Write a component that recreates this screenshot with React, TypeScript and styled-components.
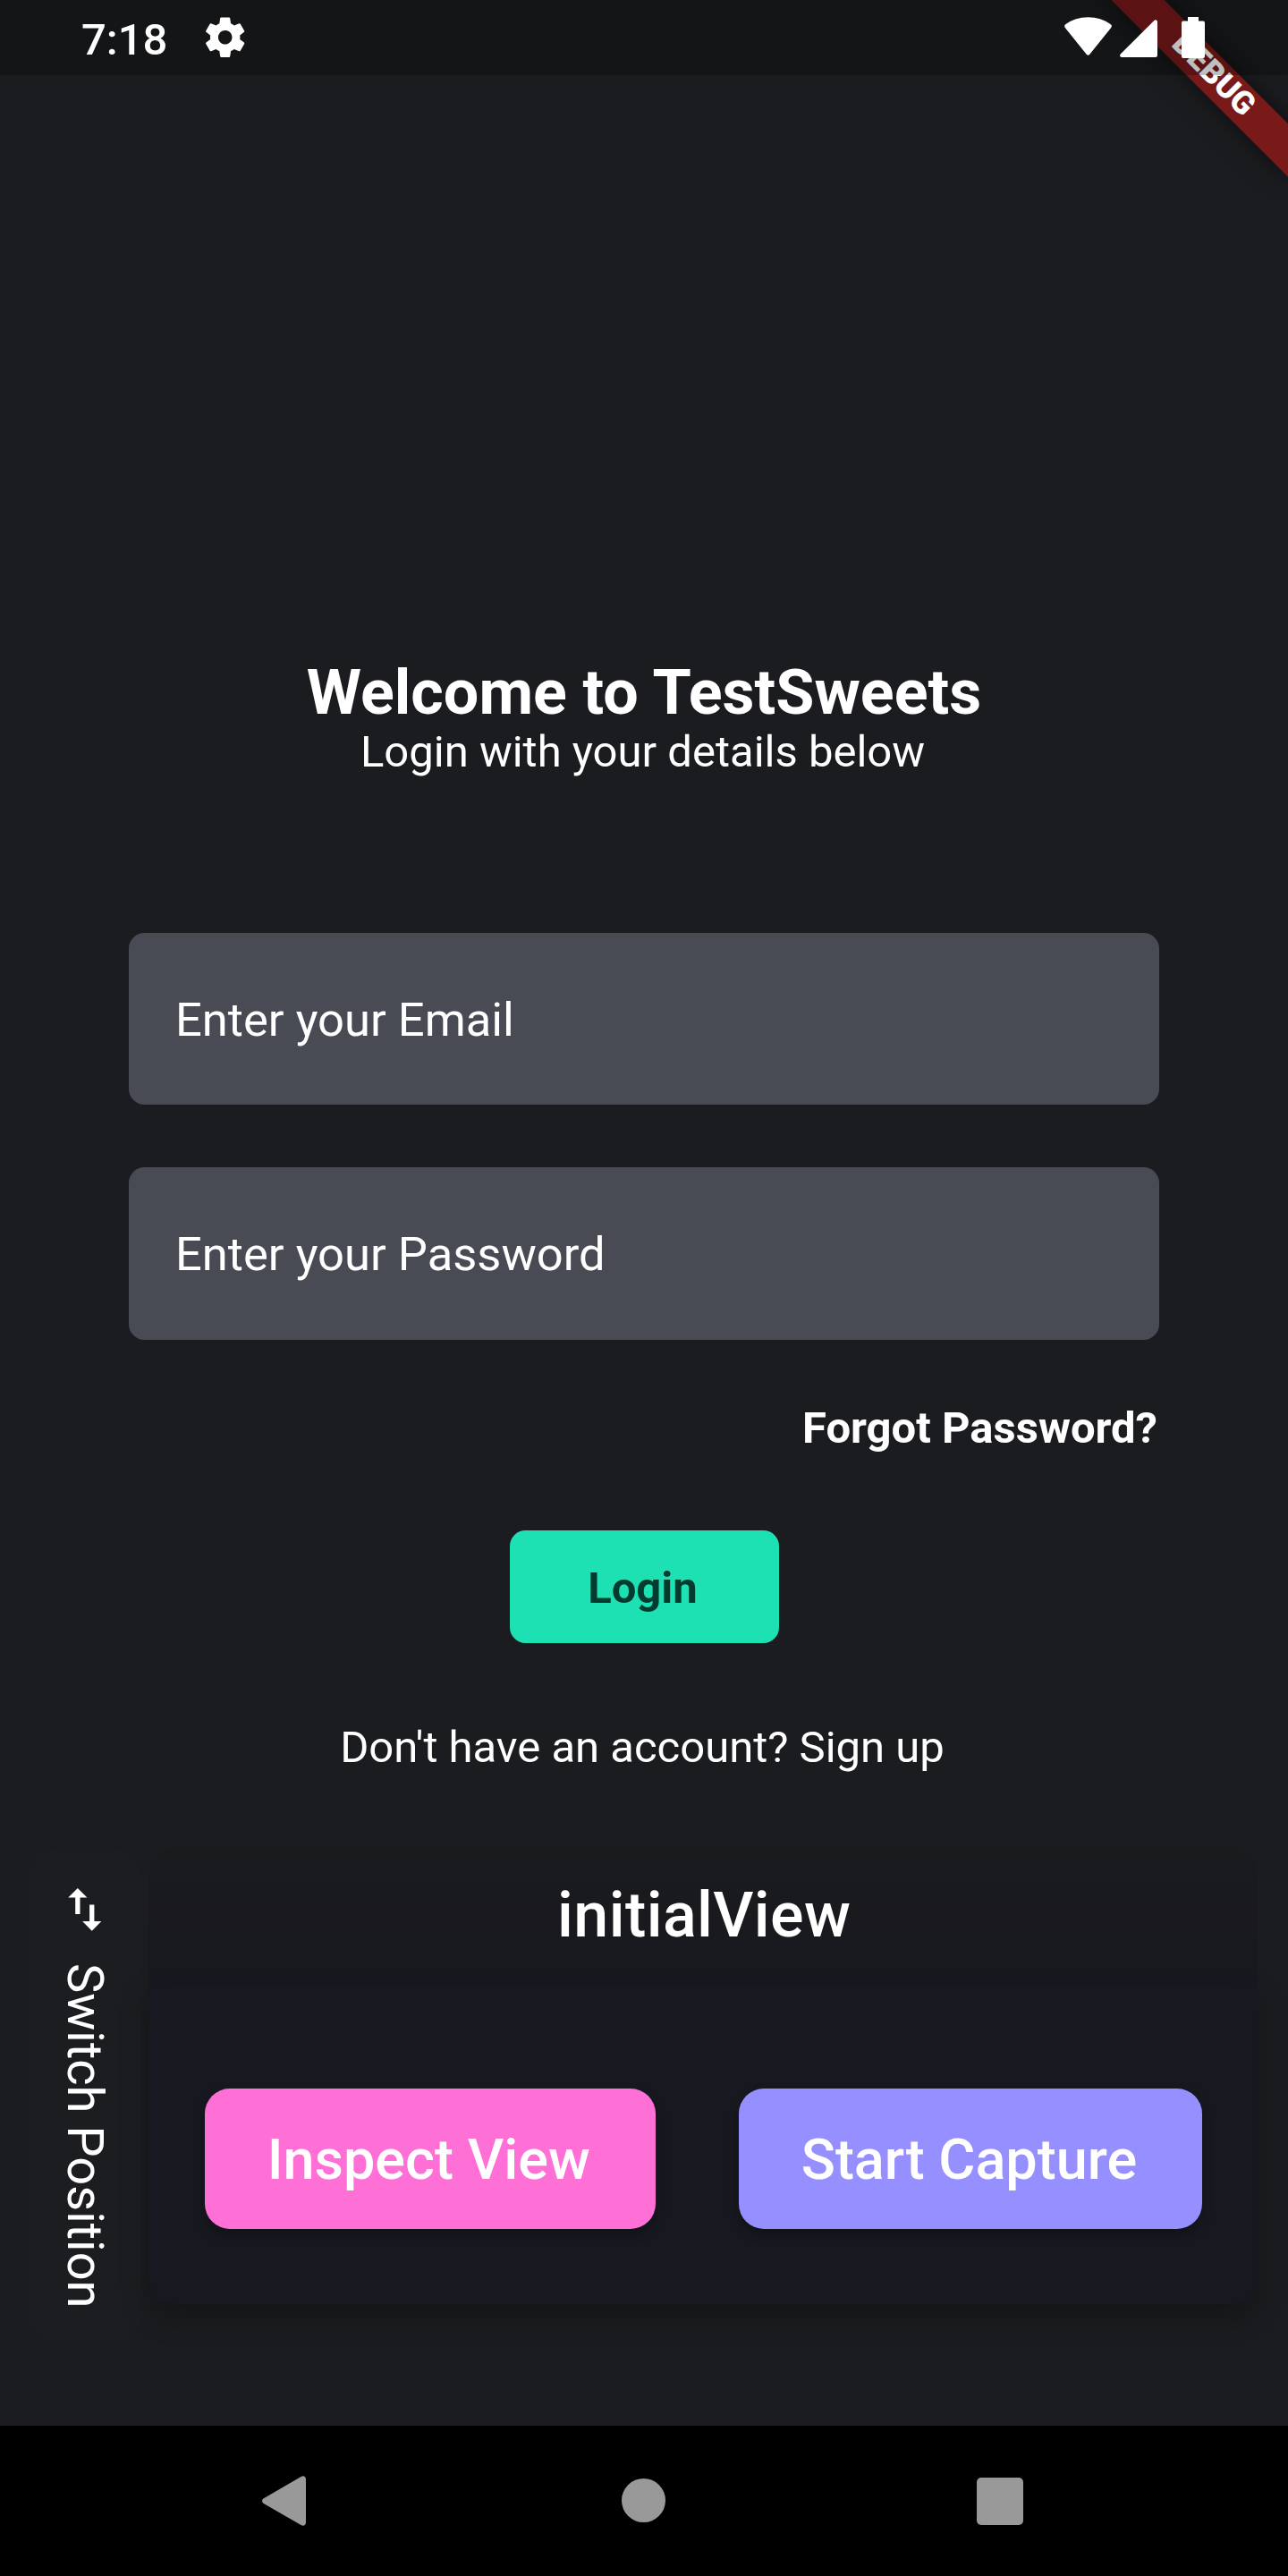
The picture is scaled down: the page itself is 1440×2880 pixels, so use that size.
import React from 'react';
import styled, { createGlobalStyle } from 'styled-components';

const GlobalStyle = createGlobalStyle`
  * { box-sizing: border-box; }
  body { margin: 0; background: #1b1c1f; }
  svg { display: block; flex: none; }
`;

const Screen = styled.div`
  position: relative;
  display: flex;
  flex-direction: column;
  width: 1440px;
  height: 2880px;
  overflow: hidden;
  background: #1b1c1f;
  color: #fff;
  font-family: Roboto, 'Liberation Sans', sans-serif;
  white-space: nowrap;
`;

const StatusBar = styled.header`
  position: relative;
  z-index: 2;
  display: flex;
  flex: none;
  align-items: center;
  justify-content: space-between;
  height: 84px;
  padding: 0 93px 0 91px;
  background: rgba(0, 0, 0, 0.25);
`;

const StatusGroup = styled.div`
  display: flex;
  align-items: center;
`;

const Clock = styled.span`
  padding-top: 5px;
  margin-right: 37.5px;
  font-size: 49px;
  font-weight: 500;
  line-height: 57px;
`;

/* Corner ribbon laid over the page, under the translucent status bar. */
const DebugBanner = styled.div`
  position: absolute;
  z-index: 1;
  top: 63px;
  right: -56px;
  width: 280px;
  height: 42px;
  transform: rotate(45deg);
  background:
    linear-gradient(rgba(183, 28, 28, 0.627), rgba(183, 28, 28, 0.627)),
    #131416;
  box-shadow: 0 0 28px rgba(0, 0, 0, 0.5);
  font-size: 35.7px;
  font-weight: 900;
  line-height: 39px;
  text-align: center;
`;

const Main = styled.main`
  display: flex;
  flex: 1;
  flex-direction: column;
  padding-top: 652px;
`;

const LoginForm = styled.section`
  display: flex;
  flex-direction: column;
  align-items: center;
  padding: 0 144px;
`;

const Title = styled.h1`
  margin: 0;
  font-size: 70px;
  font-weight: 700;
  line-height: 76px;
  letter-spacing: 0.05px;
`;

const BodyText = styled.p<{ $top?: number; $shift: number }>`
  margin: ${(p) => p.$top ?? 0}px 0 0;
  padding-right: ${(p) => p.$shift}px;
  font-size: 49px;
  line-height: 57px;
`;

const Fields = styled.div`
  display: flex;
  flex-direction: column;
  align-self: stretch;
  gap: 70px;
  margin-top: 173.5px;
`;

const Field = styled.div`
  display: flex;
  align-items: center;
  height: 192.5px;
  padding: 2px 52px 0;
  border-radius: 17.5px;
  background: #484a54;
  font-size: 52.5px;
`;

const ForgotLink = styled.a`
  align-self: flex-end;
  margin-top: 70.5px;
  padding-right: 2px;
  font-size: 49px;
  font-weight: 700;
  line-height: 57px;
`;

const LoginButton = styled.button`
  width: 301px;
  height: 126px;
  margin-top: 86px;
  padding: 3px 3px 0 0;
  border: 0;
  border-radius: 17.5px;
  background: #1ee1b3;
  color: #053b2f;
  font: 700 49px/57px Roboto, 'Liberation Sans', sans-serif;
`;

const CaptureOverlay = styled.section`
  display: flex;
  align-items: flex-start;
  gap: 8px;
  margin-top: 85px;
  padding: 0 34px 0 32px;
`;

const SwitchTab = styled.div`
  display: flex;
  flex: none;
  flex-direction: column;
  align-items: center;
  width: 125.5px;
  height: 550px;
  padding-top: 36px;
  border-radius: 28px;
  background: #1c1d20;
`;

const SwitchLabel = styled.span`
  margin-top: 28px;
  font-size: 56px;
  line-height: 66px;
  writing-mode: vertical-rl;
`;

const CapturePanel = styled.div`
  flex: 1;
`;

const PanelHeader = styled.div`
  height: 151px;
  padding: 33px 0 0 3px;
  border-radius: 28px 28px 0 0;
  background: linear-gradient(#1a1b1d, #181820);
  font-size: 70px;
  font-weight: 500;
  line-height: 82px;
  letter-spacing: 0.4px;
  text-align: center;
`;

const PanelBody = styled.div`
  display: flex;
  justify-content: space-between;
  height: 358px;
  padding: 116.5px 62px 0 63.5px;
  border-radius: 0 0 28px 28px;
  background: #181820;
  box-shadow: 0 14px 32px rgba(0, 0, 0, 0.25);
`;

const PanelButton = styled.button<{ $color: string; $width: number }>`
  width: ${(p) => p.$width}px;
  height: 157.5px;
  padding: 2px 3px 0 0;
  border: 0;
  border-radius: 28px;
  background: ${(p) => p.$color};
  box-shadow: 0 6px 12px rgba(0, 0, 0, 0.3);
  color: #fff;
  font: 500 63px/73px Roboto, 'Liberation Sans', sans-serif;
`;

const NavBar = styled.nav`
  display: flex;
  flex: none;
  align-items: center;
  justify-content: space-between;
  height: 168px;
  padding: 0 296px 0 293px;
  background: #000;
`;

const HomeKey = styled.span`
  width: 49px;
  height: 49px;
  margin: 0 0 1px 5px;
  border-radius: 50%;
  background: #999;
`;

const RecentsKey = styled.span`
  width: 52.5px;
  height: 53px;
  border-radius: 5px;
  background: #999;
`;

const GearIcon = () => (
  <svg width="53.4" height="53.4" viewBox="0 0 24 24" fill="#fff">
    <path d="M19.43 12.98c.04-.32.07-.64.07-.98s-.03-.66-.07-.98l2.11-1.65c.19-.15.24-.42.12-.64l-2-3.46c-.12-.22-.39-.3-.61-.22l-2.49 1c-.52-.4-1.08-.73-1.69-.98l-.38-2.65C14.46 2.18 14.25 2 14 2h-4c-.25 0-.46.18-.49.42l-.38 2.65c-.61.25-1.17.59-1.69.98l-2.49-1c-.23-.09-.49 0-.61.22l-2 3.46c-.13.22-.07.49.12.64l2.11 1.65c-.04.32-.07.65-.07.98s.03.66.07.98l-2.11 1.65c-.19.15-.24.42-.12.64l2 3.46c.12.22.39.3.61.22l2.49-1c.52.4 1.08.73 1.69.98l.38 2.65c.03.24.24.42.49.42h4c.25 0 .46-.18.49-.42l.38-2.65c.61-.25 1.17-.59 1.69-.98l2.49 1c.23.09.49 0 .61-.22l2-3.46c.12-.22.07-.49-.12-.64l-2.11-1.65zM12 15.5c-1.93 0-3.5-1.57-3.5-3.5s1.57-3.5 3.5-3.5 3.5 1.57 3.5 3.5-1.57 3.5-3.5 3.5z" />
  </svg>
);

const StatusIcons = styled(StatusGroup)`
  > :nth-child(2) { margin-left: 9px; }
  > :nth-child(3) { margin-left: 27px; }
`;

const WifiIcon = () => (
  <svg width="53" height="84" viewBox="0 0 53 84" fill="#fff">
    <path d="M26.5 19.3C17 19.3 8.2 22.2 1.2 27.2Q-.6 28.6 .8 31L24.7 60.8Q26.5 62.7 28.3 60.8L52.2 31Q53.6 28.6 51.8 27.2C44.8 22.2 36 19.3 26.5 19.3Z" />
  </svg>
);

const SignalIcon = () => (
  <svg width="42" height="84" viewBox="0 0 42 84" fill="#fff">
    <path d="M42 24.5V61.8Q42 64 39.8 64H2.2C.2 64-.5 61.9.7 60.5L38.3 22.9C39.8 21.4 42 22.3 42 24.5Z" />
  </svg>
);

const BatteryIcon = () => (
  <svg width="26" height="84" viewBox="0 0 26 84" fill="#fff">
    <path d="M7 19H19V23.5H24Q26 23.5 26 25.5V63Q26 65 24 65H2Q0 65 0 63V25.5Q0 23.5 2 23.5H7Z" />
  </svg>
);

const SwapIcon = () => (
  <svg width="63.6" height="63.6" viewBox="0 0 24 24" fill="#fff">
    <path d="M9 3 5 6.99h3V14h2V6.99h3L9 3zm7 14.01V10h-2v7.01h-3L15 21l4-3.99h-3z" />
  </svg>
);

const BackKey = () => (
  <svg width="49" height="56" viewBox="0 0 49 56" fill="#999">
    <path d="M1.8 25.3 43.5.9C46.5-.7 49 .8 49 4V52C49 55.2 46.5 56.7 43.5 55.1L1.8 30.9C-.6 29.4-.6 26.8 1.8 25.3Z" />
  </svg>
);

export default function App() {
  return (
    <>
      <GlobalStyle />
      <Screen>
        <StatusBar>
          <StatusGroup>
            <Clock>7:18</Clock>
            <GearIcon />
          </StatusGroup>
          <StatusIcons>
            <WifiIcon />
            <SignalIcon />
            <BatteryIcon />
          </StatusIcons>
        </StatusBar>
        <DebugBanner>DEBUG</DebugBanner>
        <Main>
          <LoginForm>
            <Title>Welcome to TestSweets</Title>
            <BodyText $shift={3}>Login with your details below</BodyText>
            <Fields>
              <Field>Enter your Email</Field>
              <Field>Enter your Password</Field>
            </Fields>
            <ForgotLink>Forgot Password?</ForgotLink>
            <LoginButton>Login</LoginButton>
            <BodyText $top={88} $shift={4}>Don't have an account? Sign up</BodyText>
          </LoginForm>
          <CaptureOverlay>
            <SwitchTab>
              <SwapIcon />
              <SwitchLabel>Switch Position</SwitchLabel>
            </SwitchTab>
            <CapturePanel>
              <PanelHeader>initialView</PanelHeader>
              <PanelBody>
                <PanelButton $color="#ff70d7" $width={503.5}>Inspect View</PanelButton>
                <PanelButton $color="#968fff" $width={518}>Start Capture</PanelButton>
              </PanelBody>
            </CapturePanel>
          </CaptureOverlay>
        </Main>
        <NavBar>
          <BackKey />
          <HomeKey />
          <RecentsKey />
        </NavBar>
      </Screen>
    </>
  );
}
